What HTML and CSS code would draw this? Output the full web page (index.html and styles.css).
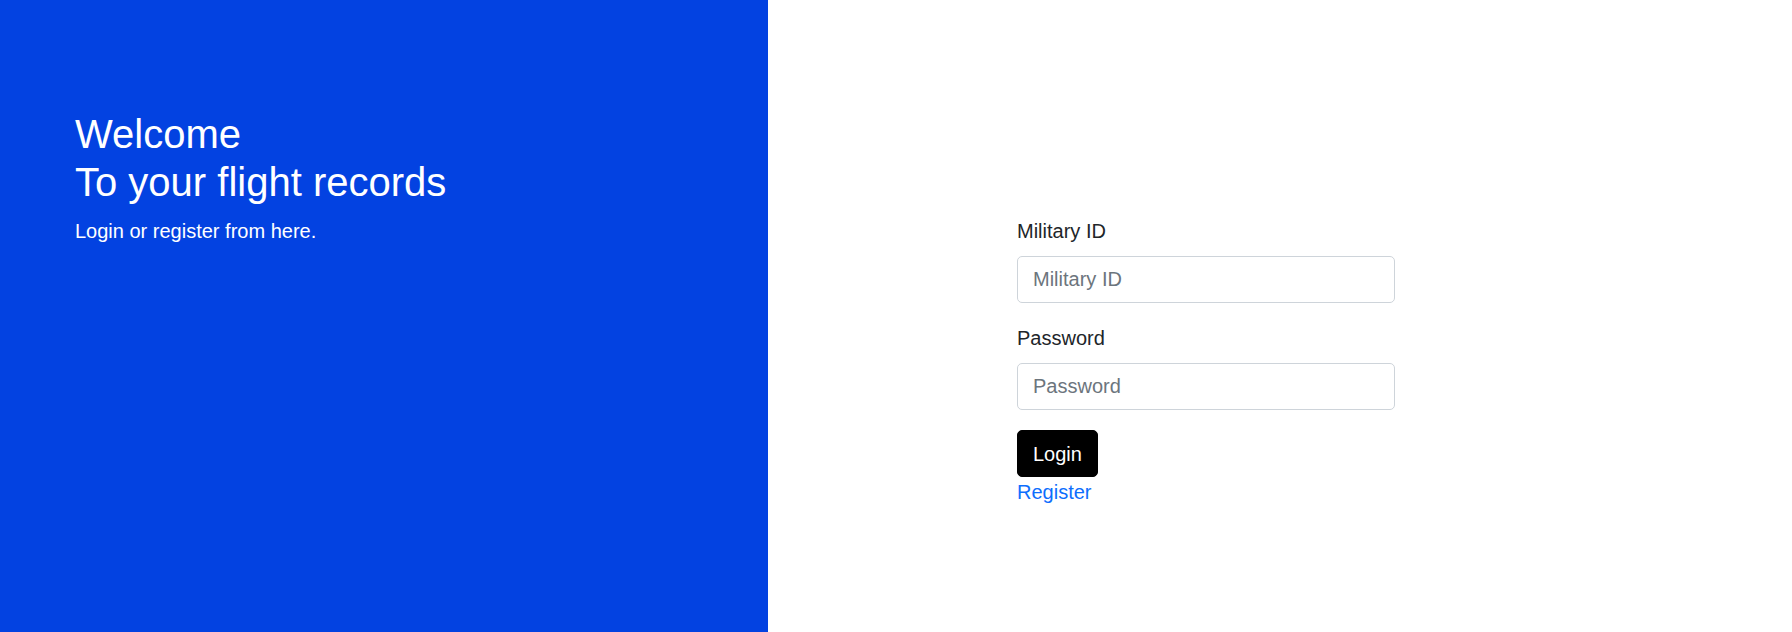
FILE: index.html
```html
<!DOCTYPE html>
<html lang="en">
<head>
<meta charset="utf-8">
<title>Flight records - Login</title>
<link rel="stylesheet" href="styles.css">
</head>
<body>
<div class="page">
  <section class="hero">
    <h1 class="hero-title">Welcome<br>To your flight records</h1>
    <p class="hero-text">Login or register from here.</p>
  </section>
  <section class="side">
    <form class="login-form">
      <div class="field">
        <label class="field-label" for="mid">Military ID</label>
        <input class="field-input" id="mid" type="text" placeholder="Military ID">
      </div>
      <div class="field">
        <label class="field-label" for="pwd">Password</label>
        <input class="field-input" id="pwd" type="password" placeholder="Password">
      </div>
      <button class="btn-login" type="button">Login</button>
      <a class="register-link" href="#">Register</a>
    </form>
  </section>
</div>
</body>
</html>
```
FILE: styles.css
```css
* { box-sizing: border-box; }
html, body { margin: 0; padding: 0; height: 100%; }
body {
  font-family: "Liberation Sans", Arial, sans-serif;
  font-size: 20px;
  line-height: 30px;
  color: #212529;
  background: #fff;
}
.page {
  display: flex;
  height: 632px;
}
.hero {
  width: 768px;
  flex: none;
  background: #0342e1;
  color: #fff;
  padding: 110px 0 0 75px;
}
.hero-title {
  margin: 0 0 10px;
  font-size: 40px;
  line-height: 48px;
  font-weight: 400;
}
.hero-text {
  margin: 0;
  font-size: 20px;
  line-height: 30px;
}
.side {
  flex: 1;
  padding: 216px 0 0 249px;
}
.login-form {
  width: 378px;
  display: flex;
  flex-direction: column;
  align-items: flex-start;
}
.field {
  width: 100%;
  margin-bottom: 20px;
}
.field-label {
  display: block;
  margin-bottom: 10px;
  line-height: 30px;
}
.field-input {
  display: block;
  width: 100%;
  height: 47px;
  padding: 7.5px 15px;
  font-family: inherit;
  font-size: 20px;
  line-height: 30px;
  color: #212529;
  background: #fff;
  border: 1px solid #ced4da;
  border-radius: 5px;
  outline: none;
}
.field-input::placeholder { color: #6c757d; opacity: 1; }
.btn-login {
  height: 47px;
  padding: 7.5px 15px;
  font-family: inherit;
  font-size: 20px;
  line-height: 30px;
  color: #fff;
  background: #000;
  border: 1px solid #000;
  border-radius: 5px;
  cursor: pointer;
}
.register-link {
  color: #0d6efd;
  text-decoration: none;
  line-height: 30px;
}
```
